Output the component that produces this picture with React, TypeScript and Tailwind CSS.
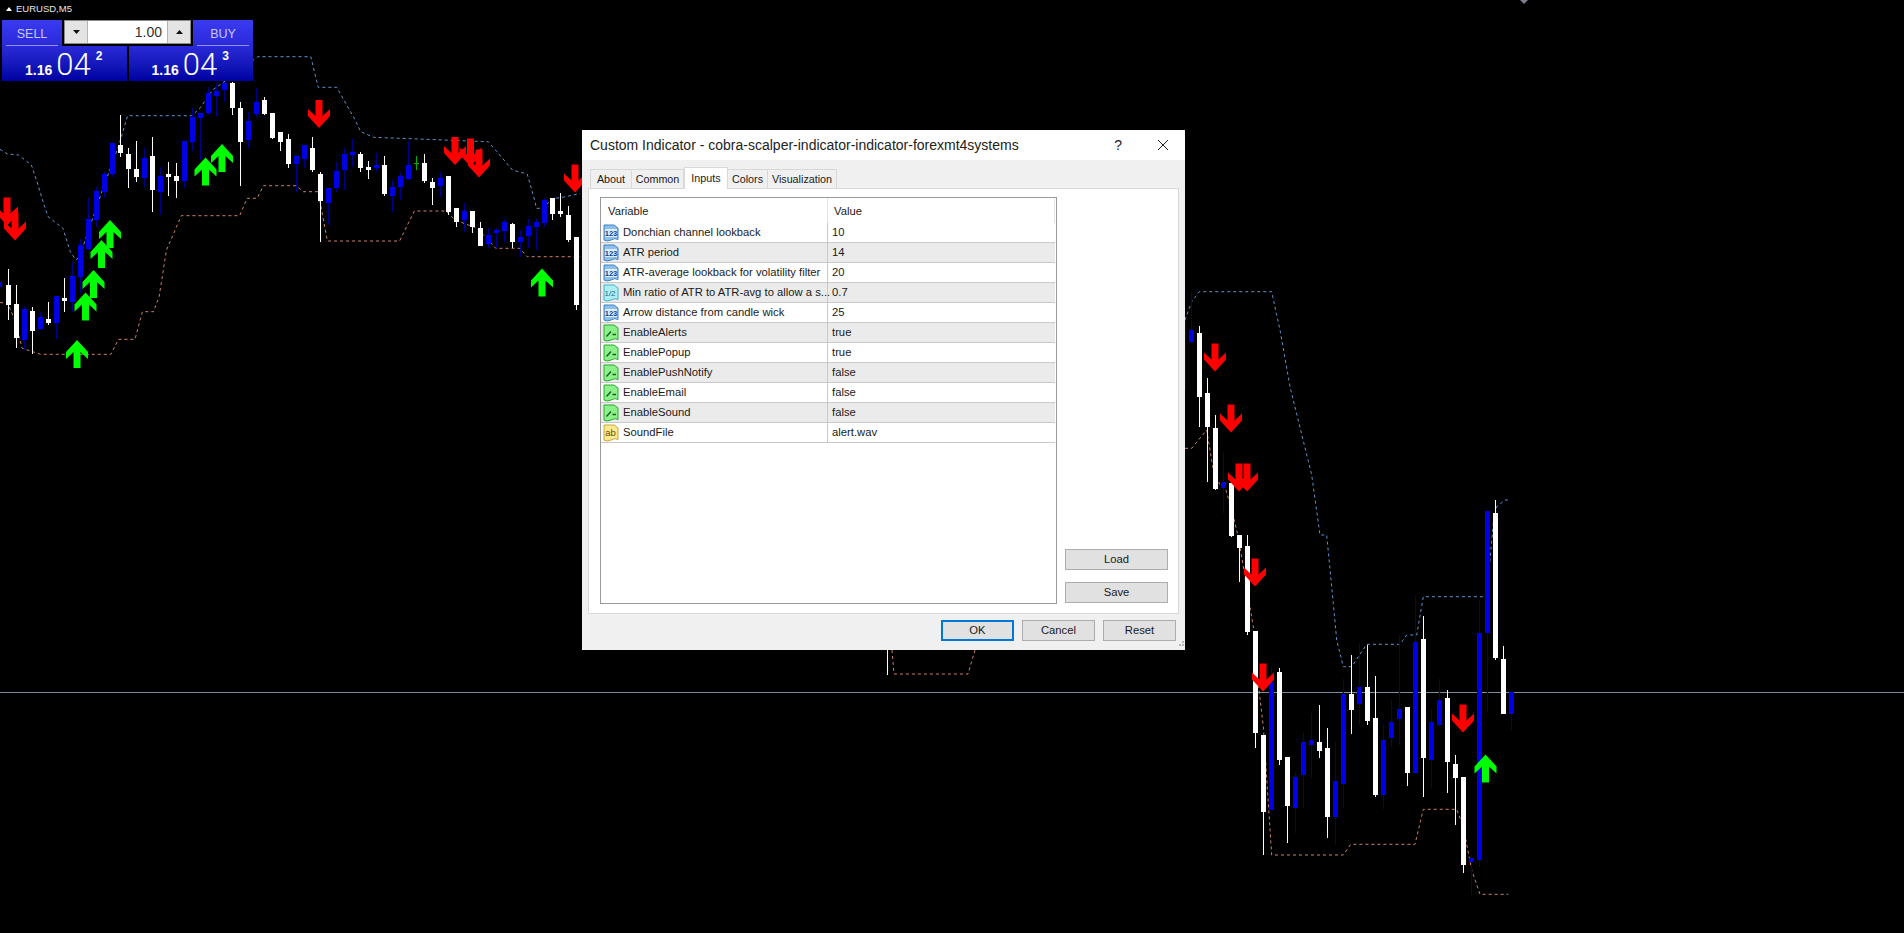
import React from "react";

type Candle = [number, number, number, number, "w" | "b" | "g"];

// wick top, wick bottom, body top, body bottom - in crop units, scaled below
const leftCandles: Candle[] = [
  [808, 960, 855, 915, "w"], [855, 1045, 912, 1013, "w"], [920, 1050, 927, 1020, "b"], [920, 1062, 933, 992, "w"],
  [935, 990, 950, 988, "b"], [905, 975, 957, 970, "w"], [888, 1018, 888, 968, "b"], [835, 935, 895, 903, "w"],
  [785, 935, 828, 905, "b"], [718, 880, 735, 830, "b"], [595, 750, 657, 748, "b"], [560, 680, 572, 660, "b"],
  [515, 595, 522, 575, "b"], [430, 530, 430, 523, "b"], [345, 470, 435, 458, "w"], [445, 563, 462, 508, "w"],
  [423, 545, 507, 532, "w"], [445, 560, 475, 535, "b"], [410, 635, 468, 570, "w"], [500, 645, 528, 575, "b"],
  [485, 588, 522, 530, "w"], [490, 595, 528, 542, "w"], [423, 565, 423, 542, "b"], [325, 452, 350, 425, "b"],
  [340, 480, 340, 353, "b"], [260, 345, 280, 340, "b"], [250, 348, 272, 288, "b"], [245, 305, 250, 270, "b"],
  [245, 345, 250, 325, "w"], [305, 557, 325, 425, "w"], [335, 445, 362, 420, "b"], [265, 350, 307, 342, "b"],
  [292, 345, 300, 343, "w"], [340, 418, 340, 413, "w"], [395, 452, 397, 425, "w"], [403, 503, 418, 492, "w"],
  [465, 575, 468, 492, "b"], [435, 505, 435, 477, "b"], [410, 515, 445, 510, "w"], [515, 725, 523, 602, "w"],
  [565, 675, 565, 608, "b"], [485, 575, 513, 565, "b"], [445, 570, 462, 510, "b"], [418, 500, 457, 465, "b"],
  [455, 515, 462, 503, "w"], [483, 537, 502, 510, "w"], [458, 515, 496, 503, "b"], [468, 587, 496, 582, "w"],
  [540, 635, 560, 588, "b"], [515, 600, 528, 562, "b"], [423, 540, 496, 537, "b"], [467, 510, 488, 490, "g"],
  [462, 548, 490, 542, "w"], [535, 615, 546, 563, "w"], [515, 590, 533, 557, "b"], [528, 645, 528, 635, "w"],
  [625, 680, 625, 667, "w"], [610, 695, 633, 660, "b"], [633, 700, 633, 682, "w"], [665, 737, 685, 737, "w"],
  [685, 745, 706, 732, "b"], [685, 745, 690, 700, "b"], [658, 725, 665, 692, "b"], [668, 745, 672, 725, "w"],
  [690, 772, 711, 725, "b"], [658, 745, 678, 708, "b"], [658, 750, 665, 680, "b"], [595, 680, 600, 668, "b"],
  [595, 660, 595, 642, "w"], [578, 650, 633, 642, "w"], [618, 725, 645, 720, "w"], [710, 930, 712, 915, "w"],
];

const rightCandlesA: Candle[] = [
  [65, 220, 180, 215, "b"], [168, 470, 188, 380, "w"], [325, 635, 370, 470, "w"], [435, 660, 474, 658, "w"],
  [545, 730, 635, 655, "b"], [640, 800, 640, 798, "w"], [795, 935, 795, 835, "w"], [795, 1095, 828, 1085, "w"],
];

const rightCandlesB: Candle[] = [
  [453, 805, 453, 760, "w"], [765, 1125, 765, 995, "w"], [560, 990, 605, 990, "b"], [565, 855, 575, 840, "w"],
  [830, 1088, 830, 978, "w"], [875, 1060, 892, 984, "b"], [760, 985, 787, 885, "b"], [700, 895, 780, 795, "b"],
  [675, 835, 785, 813, "w"], [745, 1075, 805, 1010, "w"], [785, 1095, 903, 1010, "b"], [598, 985, 642, 912, "b"],
  [525, 762, 642, 690, "w"], [490, 735, 622, 672, "b"], [495, 735, 622, 722, "w"], [588, 950, 714, 945, "w"],
  [732, 988, 780, 945, "b"], [660, 800, 726, 773, "b"], [465, 795, 687, 717, "b"], [680, 918, 682, 878, "w"],
  [348, 878, 485, 878, "b"], [408, 950, 478, 833, "w"], [688, 925, 726, 840, "b"], [598, 742, 660, 735, "b"],
  [630, 940, 655, 845, "w"], [825, 1035, 852, 893, "w"], [892, 1180, 892, 1155, "w"], [1125, 1245, 1135, 1147, "b"],
  [360, 1160, 460, 1140, "b"], [93, 695, 93, 460, "b"], [60, 540, 98, 535, "w"], [498, 702, 537, 702, "w"],
  [636, 750, 636, 702, "b"],
];

const toPts = (pts: number[][], ox: number, sx: number, oy: number) =>
  pts.map(([x, y]) => `${(ox + x / sx).toFixed(1)},${(oy + y / 3).toFixed(1)}`).join(" ");

const upperA = [[0, 448], [20, 462], [50, 465], [85, 495], [100, 545], [115, 600], [130, 650], [170, 685], [190, 755], [205, 780], [215, 770], [280, 560], [320, 440], [345, 347], [518, 347], [540, 325], [575, 270], [600, 250], [697, 170], [840, 170], [860, 262], [910, 262], [960, 360], [975, 395], [1010, 412], [1320, 425], [1370, 490], [1385, 510], [1425, 522], [1445, 600], [1450, 625], [1470, 625], [1490, 597], [1530, 590], [1568, 580]];
const lowerA = [[0, 908], [20, 908], [40, 960], [60, 1045], [110, 1063], [300, 1063], [320, 1018], [365, 1018], [385, 935], [415, 935], [430, 890], [450, 750], [490, 647], [648, 647], [668, 595], [695, 595], [712, 557], [800, 557], [820, 575], [860, 575], [885, 723], [1080, 723], [1120, 633], [1205, 633], [1230, 660], [1290, 685], [1340, 745], [1405, 745], [1425, 770], [1568, 770]];
const upperB = [[45, 150], [65, 95], [88, 65], [305, 65], [330, 180], [360, 350], [425, 615], [450, 795], [470, 795], [490, 1000], [500, 1110], [520, 1190], [545, 1190], [590, 1123], [690, 1123], [710, 1095], [740, 1095], [760, 980], [950, 980], [970, 760], [980, 710], [1005, 690], [1015, 690]];
const lowerB = [[45, 535], [65, 535], [110, 480], [130, 600], [150, 645], [165, 650], [185, 720], [205, 800], [225, 920], [250, 1070], [260, 1200], [280, 1370], [305, 1755], [520, 1755], [542, 1723], [735, 1723], [760, 1618], [860, 1618], [880, 1670], [905, 1800], [930, 1873], [1015, 1873]];

const downArrows = [[7, 225.5], [15, 240.5], [319, 128], [455, 165], [470.5, 166.5], [479, 177.5], [575, 192.5], [1215, 371.5], [1231, 432.5], [1239, 491.5], [1247, 491.5], [1255, 586.5], [1263, 691.5], [1463, 732.5]];
const upArrows = [[77, 340], [85.5, 292.5], [93.5, 270], [101.5, 240], [110, 220], [205.5, 157.5], [222, 144], [542, 268.5], [1485.5, 754.5]];

function CandleMark({ c, x, oy }: { c: Candle; x: number; oy: number }) {
  const [wt, wb, bt, bb, kind] = c;
  const top = oy + wt / 3;
  const bodyTop = oy + bt / 3;
  if (kind === "g") {
    return (
      <g fill="#00b000">
        <rect x={x} y={top} width={1} height={(wb - wt) / 3} />
        <rect x={x - 2} y={bodyTop} width={5} height={1} />
      </g>
    );
  }
  return (
    <g>
      <rect x={x} y={top} width={1} height={(wb - wt) / 3} fill={kind === "w" ? "#ffffff" : "#00008c"} />
      <rect x={x - 2} y={bodyTop} width={5} height={(bb - bt) / 3} fill={kind === "w" ? "#ffffff" : "#0000e6"} />
    </g>
  );
}

function Chart() {
  return (
    <svg className="absolute left-0 top-0" width={1904} height={933} viewBox="0 0 1904 933">
      <rect x={0} y={692} width={1904} height={1} fill="#7b8c98" />
      <polyline points={toPts(upperA, 0, 2.703, 0)} fill="none" stroke="#5f93cf" strokeDasharray="3 3" />
      <polyline points={toPts(lowerA, 0, 2.703, 0)} fill="none" stroke="#cf8068" strokeDasharray="3 3" />
      <polyline points={toPts(upperB, 1170, 3, 270)} fill="none" stroke="#5f93cf" strokeDasharray="3 3" />
      <polyline points={toPts(lowerB, 1170, 3, 270)} fill="none" stroke="#cf8068" strokeDasharray="3 3" />
      <polyline points="892,650 894,674 968,674 975,650" fill="none" stroke="#cf8068" strokeDasharray="3 3" />
      <g shapeRendering="crispEdges">
        <rect x={0} y={282} width={2} height={5} fill="#0000e6" />
        <rect x={887} y={650} width={1} height={25} fill="#ffffff" />
        <rect x={1185} y={320} width={1} height={70} fill="#00008c" />
        {leftCandles.map((c, i) => (
          <CandleMark key={i} c={c} x={8 * (i + 1)} oy={0} />
        ))}
        {rightCandlesA.map((c, i) => (
          <CandleMark key={i} c={c} x={1191 + 8 * i} oy={270} />
        ))}
        {rightCandlesB.map((c, i) => (
          <CandleMark key={i} c={c} x={1255 + 8 * i} oy={480} />
        ))}
      </g>
      {downArrows.map(([x, y], i) => (
        <polygon
          key={i}
          transform={`translate(${x} ${y})`}
          points="0,0 11,-12 11,-19 3.5,-12 3.5,-28 -3.5,-28 -3.5,-12 -11,-19 -11,-12"
          fill="#ff0000"
        />
      ))}
      {upArrows.map(([x, y], i) => (
        <polygon
          key={i}
          transform={`translate(${x} ${y})`}
          points="0,0 11,12 11,19 3.5,12 3.5,28 -3.5,28 -3.5,12 -11,19 -11,12"
          fill="#00ff00"
        />
      ))}
      <polygon points="1520,0 1528,0 1524,4" fill="#7b7f8c" />
    </svg>
  );
}

function TradePanel() {
  return (
    <div className="absolute left-[2px] top-[20px] w-[251px] font-['Liberation_Sans',sans-serif] text-white">
      <div className="flex h-[26px] gap-[2px]">
        <div className="flex w-[60px] flex-col items-center bg-gradient-to-b from-[#3a3af0] to-[#2a2ad8]">
          <span className="mt-[7px] text-[12.5px] leading-[14px] text-[#c8c8ff]">SELL</span>
          <div className="mt-auto h-px w-[52px] bg-[#8f8fff]" />
        </div>
        <div className="flex h-[24px] w-[127px] border border-[#8a8a8a] bg-white">
          <div className="flex w-[23px] items-center justify-center border-r border-[#b5b5b5] bg-[#e4e4e4]">
            <svg width={7} height={4}><polygon points="0,0 7,0 3.5,4" fill="#111" /></svg>
          </div>
          <div className="flex-1 pr-[5px] text-right text-[14px] leading-[22px] text-[#333]">1.00</div>
          <div className="flex w-[23px] items-center justify-center border-l border-[#b5b5b5] bg-[#e4e4e4]">
            <svg width={7} height={4}><polygon points="0,4 7,4 3.5,0" fill="#111" /></svg>
          </div>
        </div>
        <div className="flex w-[60px] flex-col items-center bg-gradient-to-b from-[#3a3af0] to-[#2a2ad8]">
          <span className="mt-[7px] text-[12.5px] leading-[14px] text-[#c8c8ff]">BUY</span>
          <div className="mt-auto h-px w-[52px] bg-[#8f8fff]" />
        </div>
      </div>
      <div className="flex h-[35px] gap-[2px]">
        <PriceBox last="2" />
        <PriceBox last="3" />
      </div>
    </div>
  );
}

function PriceBox({ last }: { last: string }) {
  return (
    <div className="flex flex-1 items-start bg-gradient-to-b from-[#2a2ad8] to-[#0000a0] pl-[23px]">
      <span className="mt-[17px] text-[14px] font-bold leading-[14px]">1.16</span>
      <span className="ml-[4px] mt-[3px] text-[31px] leading-[31px] font-['Roboto',sans-serif] font-light">04</span>
      <span className="ml-[5px] mt-[4px] text-[12px] font-bold leading-[12px]">{last}</span>
    </div>
  );
}

function ParamIcon({ kind }: { kind: "int" | "dbl" | "bool" | "str" }) {
  const colors = {
    int: ["#8fc0ec", "#3f7ec6"],
    dbl: ["#aeeef3", "#3fb4cc"],
    bool: ["#8cf08c", "#2ea82e"],
    str: ["#fbe98e", "#c7a640"],
  }[kind];
  return (
    <svg width={16} height={18} viewBox="0 0 16 18" className="shrink-0">
      <path d="M1 1H11L15 4V15.5Q12 13.5 8 16Q4 18 1 16Z" fill={colors[0]} stroke={colors[1]} />
      {kind === "int" && (
        <>
          <rect x={2} y={5} width={12} height={8} fill="#dcecfb" />
          <text x={8} y={12} textAnchor="middle" fontSize={7.5} fontWeight={700} fontFamily="Liberation Sans" fill="#12408c">123</text>
        </>
      )}
      {kind === "dbl" && (
        <text x={7} y={12} textAnchor="middle" fontSize={8} fontFamily="Liberation Sans" fill="#1c6f8c">1/2</text>
      )}
      {kind === "bool" && <path d="M3.5 12.5L8 7.5M9.5 10.5H13" fill="none" stroke="#14601a" strokeWidth={1.4} />}
      {kind === "str" && (
        <text x={7.5} y={12} textAnchor="middle" fontSize={9.5} fontFamily="Liberation Sans" fill="#5f4f10">ab</text>
      )}
    </svg>
  );
}

const params: { name: string; value: string; kind: "int" | "dbl" | "bool" | "str" }[] = [
  { name: "Donchian channel lookback", value: "10", kind: "int" },
  { name: "ATR period", value: "14", kind: "int" },
  { name: "ATR-average lookback for volatility filter", value: "20", kind: "int" },
  { name: "Min ratio of ATR to ATR-avg to allow a s...", value: "0.7", kind: "dbl" },
  { name: "Arrow distance from candle wick", value: "25", kind: "int" },
  { name: "EnableAlerts", value: "true", kind: "bool" },
  { name: "EnablePopup", value: "true", kind: "bool" },
  { name: "EnablePushNotify", value: "false", kind: "bool" },
  { name: "EnableEmail", value: "false", kind: "bool" },
  { name: "EnableSound", value: "false", kind: "bool" },
  { name: "SoundFile", value: "alert.wav", kind: "str" },
];

function Dialog() {
  return (
    <div className="absolute left-[582px] top-[130px] flex h-[520px] w-[603px] flex-col bg-[#f0f0f0] font-['Liberation_Sans',sans-serif] text-[11.25px] text-[#1a1a1a]">
      <div className="flex h-[30px] items-center bg-white pl-[8px]">
        <span className="text-[14px] text-[#222]">Custom Indicator - cobra-scalper-indicator-indicator-forexmt4systems</span>
        <span className="ml-auto mr-[35px] text-[14px]">?</span>
        <svg width={12} height={12} className="mr-[16px]">
          <path d="M1 1L11 11M11 1L1 11" stroke="#222" strokeWidth={1} fill="none" />
        </svg>
      </div>
      <div className="flex h-[28px] items-end pl-[8px] text-[10.75px]">
        <div className="flex h-[19px] w-[42px] items-center justify-center border border-b-0 border-[#d9d9d9]">About</div>
        <div className="flex h-[19px] w-[52px] items-center justify-center border-y border-r border-b-0 border-[#d9d9d9]">Common</div>
        <div className="relative z-10 -mb-px flex h-[22px] w-[44px] items-start justify-center border border-b-0 border-[#d9d9d9] bg-white pt-[2px]">Inputs</div>
        <div className="flex h-[19px] w-[40px] items-center justify-center border-y border-r border-b-0 border-[#d9d9d9]">Colors</div>
        <div className="flex h-[19px] w-[69px] items-center justify-center border-y border-r border-b-0 border-[#d9d9d9]">Visualization</div>
      </div>
      <div className="mx-[6px] flex h-[426px] border border-[#d9d9d9] bg-white pl-[11px] pt-[8px]">
        <div className="h-[407px] w-[457px] border border-[#9a9a9a]">
          <div className="flex h-[25px] w-[454px] items-center">
            <div className="h-full w-[227px] border-r border-[#e4e4e4] pl-[7px] leading-[26px]">Variable</div>
            <div className="flex-1 pl-[6px] leading-[26px]">Value</div>
            <div className="h-full w-px bg-[#e4e4e4]" />
          </div>
          {params.map((p, i) => (
            <div key={p.name} className={`flex h-[20px] w-[454px] items-center border-b border-[#c9c9c9] ${i % 2 === 1 ? "bg-[#ebebeb]" : "bg-white"}`}>
              <div className="flex h-full w-[227px] items-center gap-[4px] border-r border-[#c9c9c9] pl-[2px]">
                <ParamIcon kind={p.kind} />
                <span className="whitespace-nowrap">{p.name}</span>
              </div>
              <div className="flex-1 pl-[4px]">{p.value}</div>
            </div>
          ))}
        </div>
        <div className="ml-[8px] flex w-[103px] flex-col gap-[12px] pt-[352px]">
          <div className="flex h-[21px] items-center justify-center border border-[#adadad] bg-[#e1e1e1]">Load</div>
          <div className="flex h-[21px] items-center justify-center border border-[#adadad] bg-[#e1e1e1]">Save</div>
        </div>
      </div>
      <div className="relative flex justify-end gap-[8px] pr-[9px] pt-[6px]">
        <div className="flex h-[21px] w-[73px] items-center justify-center border-2 border-[#0078d7] bg-[#e1e1e1]">OK</div>
        <div className="flex h-[21px] w-[73px] items-center justify-center border border-[#adadad] bg-[#e1e1e1]">Cancel</div>
        <div className="flex h-[21px] w-[73px] items-center justify-center border border-[#adadad] bg-[#e1e1e1]">Reset</div>
        <svg width={8} height={8} className="absolute bottom-0 right-0 mb-[-7px]">
          <path d="M5 1h2v2H5zM2 4h2v2H2zM5 4h2v2H5z" fill="#b5b5b5" />
        </svg>
      </div>
    </div>
  );
}

export default function App() {
  return (
    <div className="relative h-[933px] w-[1904px] overflow-hidden bg-black">
      <Chart />
      <div className="absolute left-[6px] top-[3px] flex items-center gap-[4px] font-['Liberation_Sans',sans-serif] text-[9.5px] leading-[12px] text-[#e8e8e8]">
        <svg width={6} height={4}><polygon points="0,4 6,4 3,0" fill="#fff" /></svg>
        <span>EURUSD,M5</span>
      </div>
      <TradePanel />
      <Dialog />
    </div>
  );
}
